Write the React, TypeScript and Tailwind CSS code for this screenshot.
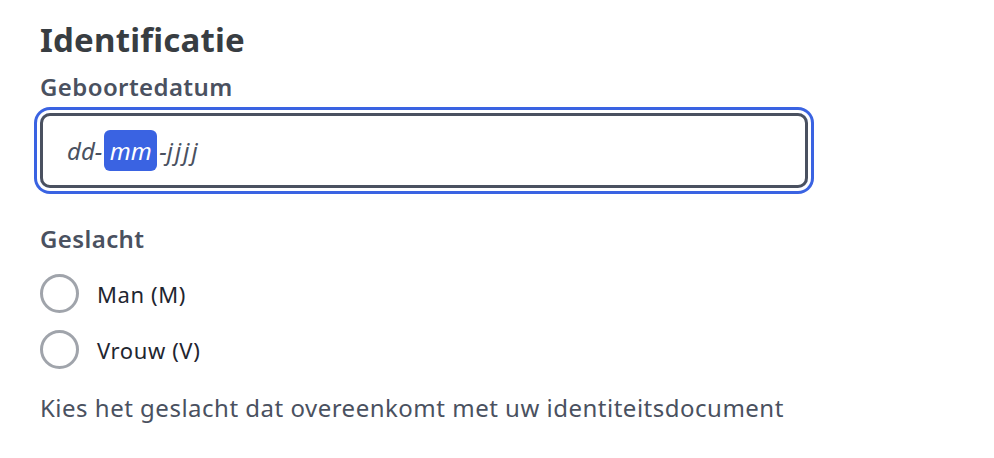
export default function App() {
  return (
    <div className="min-h-screen bg-white px-[40px] pt-[21px] font-['Noto_Sans',sans-serif]">
      <h2 className="text-[33px] leading-[38px] font-bold tracking-[0.2px] text-[#383d42]">Identificatie</h2>

      <label className="mt-[14px] block text-[24px] leading-[28px] font-semibold tracking-[0.4px] text-[#4a5160]">
        Geboortedatum
      </label>
      <div className="mt-[12px] flex h-[75px] w-[768px] items-center rounded-[10px] border-[3px] border-[#4a5160] pl-[24px] ring-[3px] ring-[#3a63e2] ring-offset-[3px]">
        <span className="flex items-center text-[24px] italic text-[#4a5160]">
          <span>dd</span>
          <span>-</span>
          <span className="mx-[2px] flex h-[41px] w-[53px] items-center justify-center rounded-[6px] bg-[#3a63e2] text-white">
            mm
          </span>
          <span>-</span>
          <span className="tracking-[2px]">jjjj</span>
        </span>
      </div>

      <div className="mt-[37px] text-[24px] leading-[28px] font-semibold tracking-[0.4px] text-[#4a5160]">Geslacht</div>
      <div className="mt-[21px] flex flex-col gap-[17px]">
        {['Man (M)', 'Vrouw (V)'].map((opt) => (
          <label key={opt} className="flex items-center gap-[18px]">
            <span className="h-[39px] w-[39px] shrink-0 rounded-full border-[3px] border-[#a0a4ab] bg-white" />
            <span className="text-[22px] leading-[28px] tracking-[0.6px] text-[#1f2630]">{opt}</span>
          </label>
        ))}
      </div>
      <p className="mt-[24px] text-[24px] leading-[30px] tracking-[0.5px] text-[#4a5160]">
        Kies het geslacht dat overeenkomt met uw identiteitsdocument
      </p>
    </div>
  );
}
